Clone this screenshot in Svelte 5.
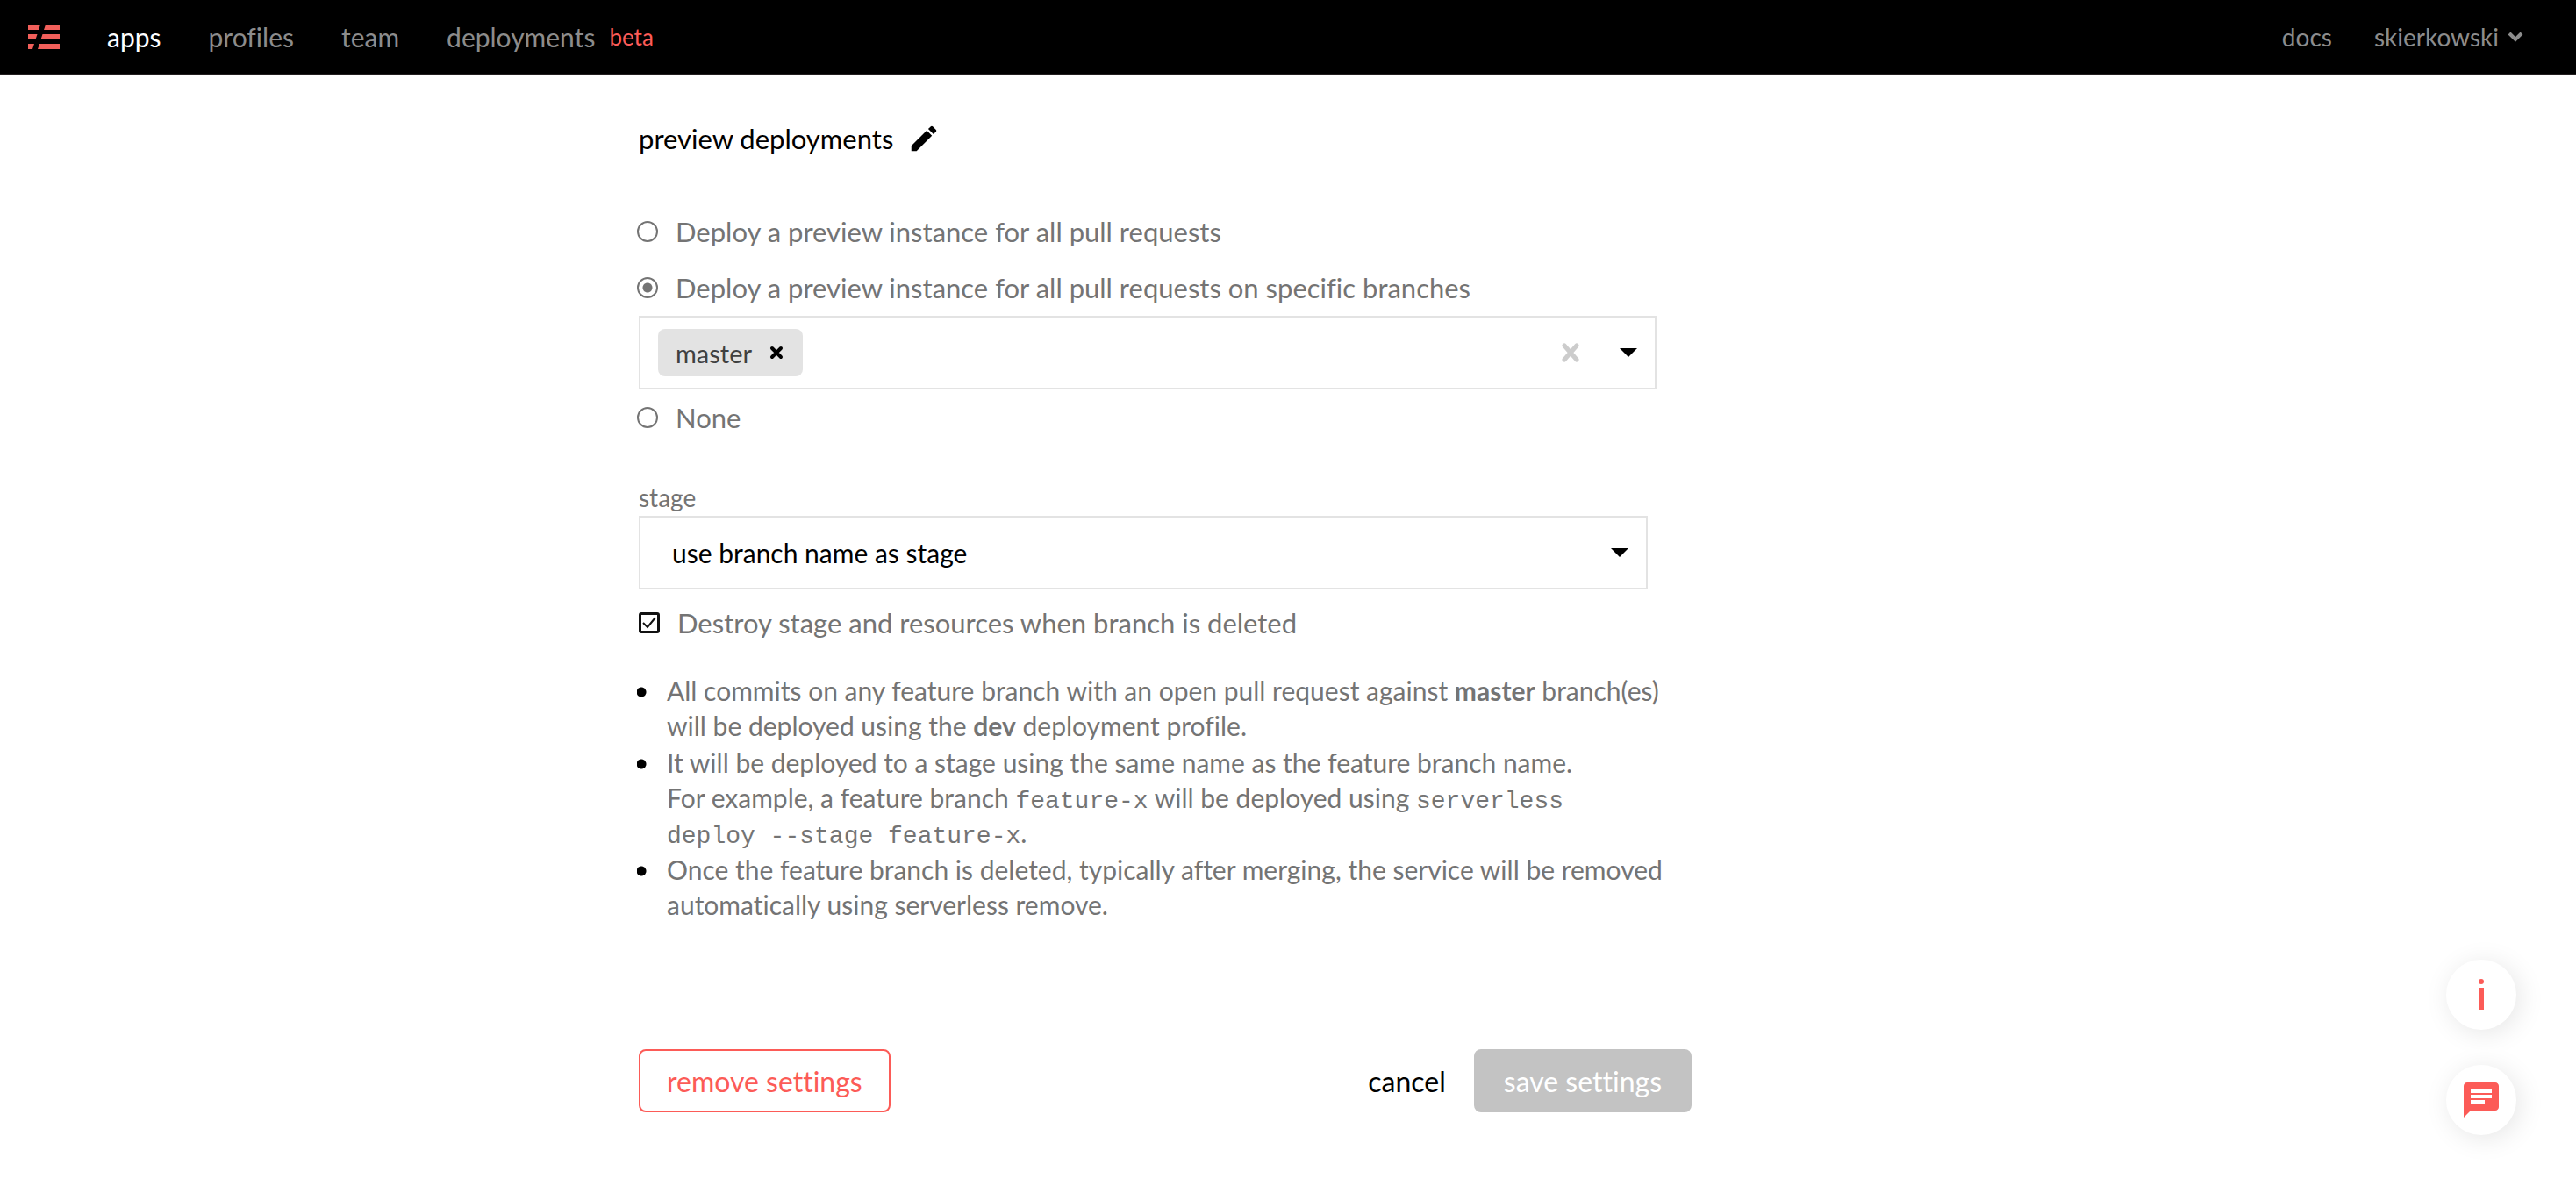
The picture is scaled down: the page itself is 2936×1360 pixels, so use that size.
<script>
  let preview = $state('branches');
  let destroy = $state(true);
  let stage = $state('branch');
</script>

<header class="topbar">
  <nav class="nav" aria-label="Main">
    <a href="#home" class="logo" aria-label="Home">
      <svg width="36" height="28" viewBox="0 0 36 28" fill="#f15f5a">
        <path d="M0 0h14l-2 6H0zM20 0h16v6H18zM0 11h10.500l-2 6H0zM16.500 11H36v6H14.500zM0 22h7l-2 6H0zM13 22h23v6H11z" />
      </svg>
    </a>
    <a href="#apps" class="link active">apps</a>
    <a href="#profiles" class="link">profiles</a>
    <a href="#team" class="link">team</a>
    <a href="#deployments" class="link">deployments <span class="beta">beta</span></a>
  </nav>
  <div class="account">
    <a href="#docs" class="link">docs</a>
    <button type="button" class="link user">
      skierkowski
      <svg width="18" height="12" viewBox="0 0 18 12" fill="none" stroke="currentColor" stroke-width="4"><path d="M2 2l7 7 7-7" /></svg>
    </button>
  </div>
</header>

<main class="page">
  <form class="settings">
    <h1 class="title">
      preview deployments
      <button type="button" class="bare" aria-label="Edit">
        <svg width="38" height="38" viewBox="0 0 24 24"><path d="M3 17.25V21h3.75L17.81 9.94l-3.75-3.75L3 17.25zM20.71 7.04a1 1 0 0 0 0-1.41l-2.34-2.34a1 1 0 0 0-1.41 0l-1.83 1.83 3.75 3.75 1.83-1.83z" /></svg>
      </button>
    </h1>

    <label class="option">
      <input type="radio" name="preview" value="all" bind:group={preview} />
      Deploy a preview instance for all pull requests
    </label>
    <label class="option">
      <input type="radio" name="preview" value="branches" bind:group={preview} />
      Deploy a preview instance for all pull requests on specific branches
    </label>
    <div class="field branches">
      <span class="tag">
        master
        <button type="button" class="bare" aria-label="Remove master">
          <svg width="16" height="16" viewBox="0 0 16 16" stroke="#000" stroke-width="4" stroke-linecap="round"><path d="M3 3l10 10M13 3L3 13" /></svg>
        </button>
      </span>
      <input class="search" type="text" aria-label="Branches" />
      <button type="button" class="bare" aria-label="Clear branches">
        <svg width="20" height="22" viewBox="0 0 20 22" stroke="#ccc" stroke-width="5" stroke-linecap="round"><path d="M3 3l14 16M17 3L3 19" /></svg>
      </button>
      <button type="button" class="bare" aria-label="Show branches">
        <svg width="20" height="10" viewBox="0 0 20 10"><path d="M0 0h20L10 10z" /></svg>
      </button>
    </div>
    <label class="option">
      <input type="radio" name="preview" value="none" bind:group={preview} />
      None
    </label>

    <label class="caption" for="stage">stage</label>
    <div class="stage">
      <select id="stage" class="field select" bind:value={stage}>
        <option value="branch">use branch name as stage</option>
      </select>
      <svg class="caret" width="20" height="10" viewBox="0 0 20 10"><path d="M0 0h20L10 10z" /></svg>
    </div>
    <label class="option destroy">
      <span class="box">
        <input type="checkbox" bind:checked={destroy} />
        {#if destroy}
          <svg class="tick" width="24" height="24" viewBox="0 0 24 24" fill="none" stroke="#111" stroke-width="2"><path d="M5 12l5 5 9-11" /></svg>
        {/if}
      </span>
      Destroy stage and resources when branch is deleted
    </label>

    <ul class="notes">
      <li>All commits on any feature branch with an open pull request against <strong>master</strong> branch(es)<br />will be deployed using the <strong>dev</strong> deployment profile.</li>
      <li>It will be deployed to a stage using the same name as the feature branch name.<br />For example, a feature branch <code>feature-x</code> will be deployed using <code>serverless<br />deploy --stage feature-x</code>.</li>
      <li>Once the feature branch is deleted, typically after merging, the service will be removed<br />automatically using serverless remove.</li>
    </ul>

    <div class="actions">
      <button type="button" class="btn remove">remove settings</button>
      <button type="button" class="cancel">cancel</button>
      <button type="submit" class="btn save" disabled>save settings</button>
    </div>
  </form>
</main>

<aside class="fabs">
  <button type="button" class="fab" aria-label="Information">
    <svg width="8" height="36" viewBox="0 0 8 36" fill="#fc5b57"><circle cx="4" cy="3" r="3" /><path d="M1 10h6v25H1z" /></svg>
  </button>
  <button type="button" class="fab" aria-label="Chat">
    <svg width="48" height="48" viewBox="0 0 24 24" fill="#fc5b57"><path d="M20 2H4c-1.1 0-2 .9-2 2v18l4-4h14c1.1 0 2-.9 2-2V4c0-1.100-.9-2-2-2zM6 6h12v2H6zM6 9h12v2H6zM6 12h8v2H6z" fill-rule="evenodd" /></svg>
  </button>
</aside>

<style>
  :global(body) {
    background: #fff;
    color: #000;
    font-family: Lato, "Open Sans", sans-serif;
    font-size: 30px;
    font-variant-ligatures: none;
  }
  button,
  input,
  select {
    font: inherit;
    font-variant-ligatures: none;
    color: inherit;
  }
  button {
    padding: 0;
    border: 0;
    background: none;
    cursor: pointer;
  }
  svg {
    display: block;
  }

  .topbar {
    display: flex;
    justify-content: space-between;
    align-items: center;
    height: 84px;
    padding: 0 60px 0 32px;
    background: #000;
    border-bottom: 2px solid #231f20;
  }
  .nav,
  .account {
    display: flex;
    align-items: center;
  }
  .nav {
    gap: 54px;
  }
  .account {
    gap: 48px;
    font-size: 28px;
  }
  .link {
    display: flex;
    align-items: center;
    color: #8c8c8c;
    line-height: 36px;
    text-decoration: none;
  }
  .active {
    color: #fff;
  }
  .beta {
    margin-left: 16px;
    color: #fc5b57;
    font-size: 26px;
  }
  .user {
    gap: 10px;
  }

  .page {
    display: grid;
    grid-template-columns: 91fr 150fr 126fr;
    padding: 50px 0 80px;
  }
  .settings {
    grid-column: 2;
    display: flex;
    flex-direction: column;
    color: #747474;
  }
  .title {
    display: flex;
    align-items: center;
    gap: 16px;
    margin: 0 0 52px;
    color: #000;
    font-size: 31px;
    font-weight: 400;
    line-height: 44px;
  }
  .option {
    display: flex;
    align-items: center;
    gap: 20px;
    height: 64px;
    margin-left: -2px;
    font-size: 31px;
    line-height: 40px;
  }
  .option input {
    appearance: none;
    box-sizing: border-box;
    flex: none;
    width: 24px;
    height: 24px;
    margin: 0;
  }
  input[type="radio"] {
    border: 2px solid #747474;
    border-radius: 50%;
    background: #fff;
  }
  input[type="radio"]:checked {
    background: radial-gradient(circle, #747474 5px, #fff 6px);
  }
  .destroy {
    margin: 6px 0 0;
  }
  .box {
    position: relative;
    display: flex;
  }
  .box input {
    border: 3px solid #111;
    border-radius: 3px;
  }
  .tick {
    position: absolute;
    inset: 0;
    pointer-events: none;
  }
  .field {
    box-sizing: border-box;
    height: 84px;
    border: 2px solid #e3e3e3;
    background: #fff;
  }
  .branches {
    display: flex;
    align-items: center;
    margin-right: 40px;
    padding: 0 20px;
  }
  .tag {
    display: flex;
    align-items: center;
    gap: 20px;
    height: 54px;
    padding: 0 22px 0 20px;
    border-radius: 8px;
    background: #e3e3e3;
    color: #404040;
    font-size: 29px;
  }
  .search {
    flex: 1;
    min-width: 0;
    border: 0;
    outline: 0;
    background: none;
  }
  .branches > button {
    margin-left: 46px;
  }
  .caption {
    margin: 40px 0 2px;
    font-size: 28px;
    line-height: 38px;
  }
  .stage {
    position: relative;
    display: grid;
    margin-right: 50px;
  }
  .select {
    appearance: none;
    padding: 0 36px;
    border-radius: 0;
    color: #000;
  }
  .caret {
    position: absolute;
    right: 22px;
    top: 37px;
    pointer-events: none;
  }
  .notes {
    display: flex;
    flex-direction: column;
    gap: 2px;
    margin: 25px 0 0 -2px;
    padding: 0;
    font-size: 30px;
    line-height: 40px;
    list-style: none;
  }
  .notes li {
    padding-left: 34px;
    background: radial-gradient(circle at 5px 22px, #000 5px, transparent 6px);
  }
  code {
    font-family: "Liberation Mono", monospace;
    font-size: 28px;
    line-height: 1;
  }
  .actions {
    display: flex;
    align-items: center;
    margin-top: 145px;
    font-size: 32px;
  }
  .btn {
    box-sizing: border-box;
    height: 72px;
    padding: 0 30px;
    border: 2px solid #fc5b57;
    border-radius: 8px;
  }
  .remove {
    margin-right: auto;
    color: #fc5b57;
  }
  .cancel {
    margin-right: 32px;
    color: #000;
  }
  .save {
    padding: 0 32px;
    border-color: #c3c3c3;
    background: #c3c3c3;
    color: #fff;
  }
  .fabs {
    position: fixed;
    right: 68px;
    bottom: 66px;
    display: flex;
    flex-direction: column;
    gap: 40px;
  }
  .fab {
    display: flex;
    align-items: center;
    justify-content: center;
    width: 80px;
    height: 80px;
    border-radius: 50%;
    background: #fff;
    box-shadow: 4px 4px 30px rgba(0, 0, 0, 0.1);
  }
</style>
